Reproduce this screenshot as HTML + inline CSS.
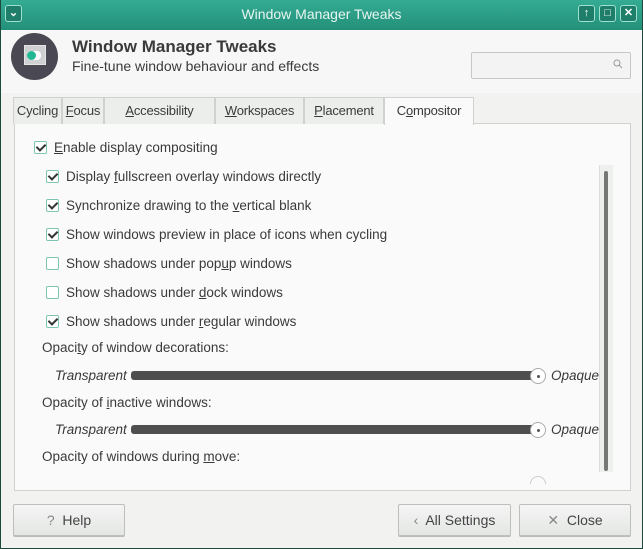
<!DOCTYPE html>
<html><head><style>
*{box-sizing:border-box;margin:0;padding:0}
body{width:643px;height:549px;overflow:hidden;font-family:"Liberation Sans",sans-serif;font-size:13px;color:#3a3a3a;background:#1d4a3d;position:relative}
.win{position:absolute;left:1px;top:0;width:641px;height:548px;background:#f2f3f1}
.title{position:absolute;left:0;top:0;width:641px;height:30px;background:linear-gradient(#34ab93,#24907a);color:#e8f5f1;text-align:center;line-height:28px;font-size:14px}
.tb{position:absolute;top:5px;width:17px;height:17px;border:1px solid #9fe0d0;border-radius:3px;background:#1f7e6a;color:#fff;font-size:11px;line-height:15px;text-align:center;font-weight:bold}
.hdr{position:absolute;left:0;top:30px;width:641px;height:63px;background:#f6f7f6}
.abs{position:absolute}
.tab{position:absolute;top:97px;height:27px;border:1px solid #cfd2cf;border-bottom:none;background:#eceeec;line-height:26px;text-align:center;font-size:13px;letter-spacing:-0.2px;white-space:nowrap;overflow:hidden}
.panel{position:absolute;left:13px;top:123px;width:617px;height:368px;border:1px solid #cfd2cf;background:#fafafa}
.cb{position:absolute;width:13px;height:13px;border:1px solid #7cc5b3;border-radius:2px;background:#fff}
.cb.on::after{content:"";position:absolute;left:3px;top:0px;width:4px;height:7px;border:solid #333;border-width:0 2px 2px 0;transform:rotate(45deg)}
.lbl{position:absolute;font-size:13.5px;white-space:nowrap}
.sl{position:absolute;left:130px;width:408px;height:9px;border-radius:3px;background:#4f4f4f}
.knob{position:absolute;width:16px;height:16px;border-radius:50%;background:#fff;border:1px solid #aaa}
.knob::after{content:"";position:absolute;left:6px;top:6px;width:3px;height:3px;border-radius:50%;background:#555}
.it{font-style:italic}
.btn{position:absolute;top:504px;height:32px;border:1px solid #bcbfbc;border-radius:2px;background:linear-gradient(#f4f5f4,#e4e6e4);text-align:center;line-height:30px;font-size:14px;box-shadow:0 1px 0 #bbb;color:#444}
.btn b{font-weight:normal;color:#888}
u{text-decoration:underline}
</style></head><body>
<div class="win">
<div class="title">Window Manager Tweaks</div>
<div class="tb" style="left:4px">⌄</div>
<div class="tb" style="left:577px">↑</div>
<div class="tb" style="left:598px">□</div>
<div class="tb" style="left:619px">✕</div>
<div class="hdr"></div>
<div class="abs" style="left:10px;top:33px;width:47px;height:47px;border-radius:50%;background:#4a4853"></div>
<div class="abs" style="left:23px;top:45px;width:22px;height:20px;background:#cfd0d2;border:1px solid #e5e5e5"></div>
<div class="abs" style="left:26px;top:51px;width:14px;height:9px;background:#fff;border-radius:4px"></div>
<div class="abs" style="left:26px;top:51px;width:9px;height:9px;background:#23b894;border-radius:50%"></div>
<div class="abs" style="left:71px;top:37px;font-size:17px;font-weight:bold;color:#3a3a3a">Window Manager Tweaks</div>
<div class="abs" style="left:71px;top:58px;font-size:14px">Fine-tune window behaviour and effects</div>
<div class="abs" style="left:470px;top:52px;width:160px;height:27px;border:1px solid #c5c8c5;border-radius:2px;background:#f2f3f2"></div>
<svg class="abs" style="left:612px;top:59px" width="10" height="10"><circle cx="4" cy="4" r="3" fill="none" stroke="#999" stroke-width="1"/><line x1="6" y1="6" x2="9" y2="9" stroke="#999"/></svg>
<div class="panel"></div>
<div class="tab" style="left:12px;width:49px">Cycling</div>
<div class="tab" style="left:61px;width:42px"><u>F</u>ocus</div>
<div class="tab" style="left:103px;width:111px"><u>A</u>ccessibility</div>
<div class="tab" style="left:214px;width:89px"><u>W</u>orkspaces</div>
<div class="tab" style="left:303px;width:80px"><u>P</u>lacement</div>
<div class="tab" style="left:383px;width:90px;background:#fafafa;height:28px">C<u>o</u>mpositor</div>
<div class="cb on" style="left:33px;top:141px"></div><div class="lbl" style="left:53px;top:140px"><u>E</u>nable display compositing</div>
<div class="cb on" style="left:45px;top:170px"></div><div class="lbl" style="left:65px;top:169px">Display <u>f</u>ullscreen overlay windows directly</div>
<div class="cb on" style="left:45px;top:199px"></div><div class="lbl" style="left:65px;top:198px">Synchronize drawing to the <u>v</u>ertical blank</div>
<div class="cb on" style="left:45px;top:228px"></div><div class="lbl" style="left:65px;top:227px">Show windows preview in place of icons when cycling</div>
<div class="cb" style="left:45px;top:257px"></div><div class="lbl" style="left:65px;top:256px">Show shadows under pop<u>u</u>p windows</div>
<div class="cb" style="left:45px;top:286px"></div><div class="lbl" style="left:65px;top:285px">Show shadows under <u>d</u>ock windows</div>
<div class="cb on" style="left:45px;top:315px"></div><div class="lbl" style="left:65px;top:314px">Show shadows under <u>r</u>egular windows</div>
<div class="lbl" style="left:41px;top:340px">Opaci<u>t</u>y of window decorations:</div>
<div class="lbl it" style="left:54px;top:368px">Transparent</div><div class="sl" style="top:371px"></div><div class="knob" style="left:529px;top:368px"></div><div class="lbl it" style="left:550px;top:368px">Opaque</div>
<div class="lbl" style="left:41px;top:395px">Opacity of <u>i</u>nactive windows:</div>
<div class="lbl it" style="left:54px;top:422px">Transparent</div><div class="sl" style="top:425px"></div><div class="knob" style="left:529px;top:422px"></div><div class="lbl it" style="left:550px;top:422px">Opaque</div>
<div class="lbl" style="left:41px;top:449px">Opacity of windows during <u>m</u>ove:</div>
<div class="abs" style="left:529px;top:476px;width:16px;height:8px;border-radius:8px 8px 0 0;border:1px solid #ccc;border-bottom:none"></div>
<div class="abs" style="left:598px;top:165px;width:14px;height:307px;background:#eef0ee;border-left:1px solid #ddd"></div>
<div class="abs" style="left:603px;top:171px;width:4px;height:300px;background:#777;border-radius:2px"></div>
<div class="btn" style="left:12px;width:112px"><b>?</b>&nbsp; Help</div>
<div class="btn" style="left:397px;width:113px"><b>‹</b>&nbsp; All Settings</div>
<div class="btn" style="left:518px;width:112px"><b>✕</b>&nbsp; Close</div>
</div>
</body></html>
